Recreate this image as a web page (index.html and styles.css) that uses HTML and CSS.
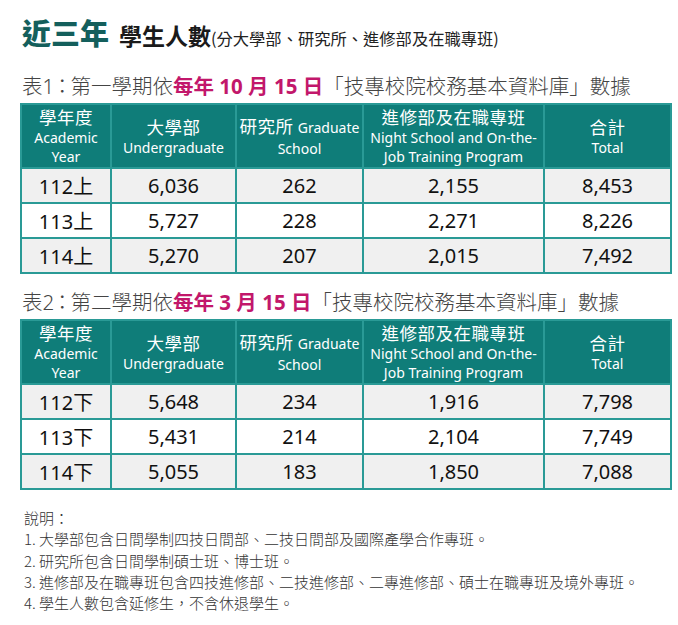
FILE: index.html
```html
<!DOCTYPE html>
<html lang="zh-Hant">
<head>
<meta charset="utf-8">
<link rel="stylesheet" href="styles.css">
</head>
<body>
<div class="page">
  <h1 class="title"><span class="t-big">近三年</span><span class="t-mid">學生人數</span><span class="t-small">(分大學部、研究所、進修部及在職專班)</span></h1>

  <p class="caption">表1<span class="colon">：</span>第一學期依<span class="hl">每年 10 月 15 日</span>「技專校院校務基本資料庫」數據</p>
  <table class="data">
    <colgroup><col class="c1"><col class="c2"><col class="c3"><col class="c4"><col class="c5"></colgroup>
    <thead>
      <tr>
        <th><span class="zh">學年度</span><span class="en">Academic<br>Year</span></th>
        <th><span class="zh">大學部</span><span class="en">Undergraduate</span></th>
        <th><span class="mix"><span class="zh-inline">研究所</span> <span class="en-inline">Graduate</span></span><span class="en">School</span></th>
        <th><span class="zh">進修部及在職專班</span><span class="en">Night School and On-the-<br>Job Training Program</span></th>
        <th><span class="zh">合計</span><span class="en">Total</span></th>
      </tr>
    </thead>
    <tbody>
      <tr><td>112上</td><td>6,036</td><td>262</td><td>2,155</td><td>8,453</td></tr>
      <tr><td>113上</td><td>5,727</td><td>228</td><td>2,271</td><td>8,226</td></tr>
      <tr><td>114上</td><td>5,270</td><td>207</td><td>2,015</td><td>7,492</td></tr>
    </tbody>
  </table>

  <p class="caption cap2">表2<span class="colon">：</span>第二學期依<span class="hl">每年 3 月 15 日</span>「技專校院校務基本資料庫」數據</p>
  <table class="data">
    <colgroup><col class="c1"><col class="c2"><col class="c3"><col class="c4"><col class="c5"></colgroup>
    <thead>
      <tr>
        <th><span class="zh">學年度</span><span class="en">Academic<br>Year</span></th>
        <th><span class="zh">大學部</span><span class="en">Undergraduate</span></th>
        <th><span class="mix"><span class="zh-inline">研究所</span> <span class="en-inline">Graduate</span></span><span class="en">School</span></th>
        <th><span class="zh">進修部及在職專班</span><span class="en">Night School and On-the-<br>Job Training Program</span></th>
        <th><span class="zh">合計</span><span class="en">Total</span></th>
      </tr>
    </thead>
    <tbody>
      <tr><td>112下</td><td>5,648</td><td>234</td><td>1,916</td><td>7,798</td></tr>
      <tr><td>113下</td><td>5,431</td><td>214</td><td>2,104</td><td>7,749</td></tr>
      <tr><td>114下</td><td>5,055</td><td>183</td><td>1,850</td><td>7,088</td></tr>
    </tbody>
  </table>

  <div class="notes">
    <p>說明：</p>
    <p>1. 大學部包含日間學制四技日間部、二技日間部及國際產學合作專班。</p>
    <p>2. 研究所包含日間學制碩士班、博士班。</p>
    <p>3. 進修部及在職專班包含四技進修部、二技進修部、二專進修部、碩士在職專班及境外專班。</p>
    <p>4. 學生人數包含延修生，不含休退學生。</p>
  </div>
</div>
</body>
</html>
```

FILE: styles.css
```css
html, body {
  margin: 0;
  padding: 0;
  background: #ffffff;
}
body {
  font-family: "Noto Sans", "Noto Sans CJK TC", sans-serif;
  color: #222;
}
.page {
  padding: 12px 8px 0 20px;
}
.title {
  margin: 0 0 0 2px;
  display: flex;
  align-items: baseline;
  line-height: 40px;
  font-weight: normal;
}
.t-big {
  font-family: "Noto Sans CJK TC", sans-serif;
  font-size: 29px;
  font-weight: 900;
  color: #145f5c;
  margin-right: 10px;
}
.t-mid {
  font-family: "Noto Sans CJK TC", sans-serif;
  font-size: 23px;
  font-weight: 700;
  color: #1a1a1a;
}
.t-small {
  font-family: "Noto Sans CJK TC", sans-serif;
  font-size: 16.3px;
  color: #222;
}
.caption {
  margin: 14px 0 0 2px;
  font-family: "Noto Sans", "Noto Sans CJK TC", sans-serif;
  font-size: 20.5px;
  font-weight: 300;
  line-height: 28px;
  color: #444;
}
.colon {
  font-feature-settings: "halt";
  margin: 0 3px;
}
.cap2 {
  margin-top: 14px;
}
.hl {
  color: #c2176b;
  font-weight: 700;
}
.data {
  border-collapse: collapse;
  table-layout: fixed;
  width: 650px;
  margin-top: 3px;
}
.c1 { width: 90px; }
.c2 { width: 125px; }
.c3 { width: 127px; }
.c4 { width: 181px; }
.c5 { width: 127px; }
.data th {
  background: #0f7d79;
  color: #fff;
  font-weight: normal;
  height: 62px;
  padding: 0;
  text-align: center;
  vertical-align: middle;
  border: 2px solid #2a9a96;
  border-top: 0;
  border-bottom: 0;
  line-height: 19px;
}
.data thead tr {
  border-top: 2px solid #2a9a96;
}
.zh {
  display: block;
  font-family: "Noto Sans CJK TC", sans-serif;
  font-size: 17.5px;
  line-height: 22px;
  letter-spacing: 0.5px;
}
.mix {
  display: block;
  line-height: 22px;
}
.zh-inline {
  font-family: "Noto Sans CJK TC", sans-serif;
  font-size: 17.5px;
  letter-spacing: 0.5px;
}
.en {
  display: block;
  font-family: "Noto Sans", sans-serif;
  font-size: 14px;
  line-height: 19px;
}
.en-inline {
  font-family: "Noto Sans", sans-serif;
  font-size: 14px;
}
.data td {
  height: 33px;
  padding: 0;
  text-align: center;
  font-family: "Noto Sans", "Noto Sans CJK TC", sans-serif;
  font-size: 20px;
  color: #111;
  border: 2px solid #2a9a96;
}
.data tbody tr:nth-child(odd) td {
  background: #f0f0f0;
}
.data tbody tr:nth-child(even) td {
  background: #ffffff;
}
.notes {
  margin-top: 17px;
  margin-left: 4px;
  font-family: "Noto Sans CJK TC", sans-serif;
  font-size: 15px;
  font-weight: 300;
  color: #333;
}
.notes p {
  margin: 0;
  line-height: 21.3px;
}
```
